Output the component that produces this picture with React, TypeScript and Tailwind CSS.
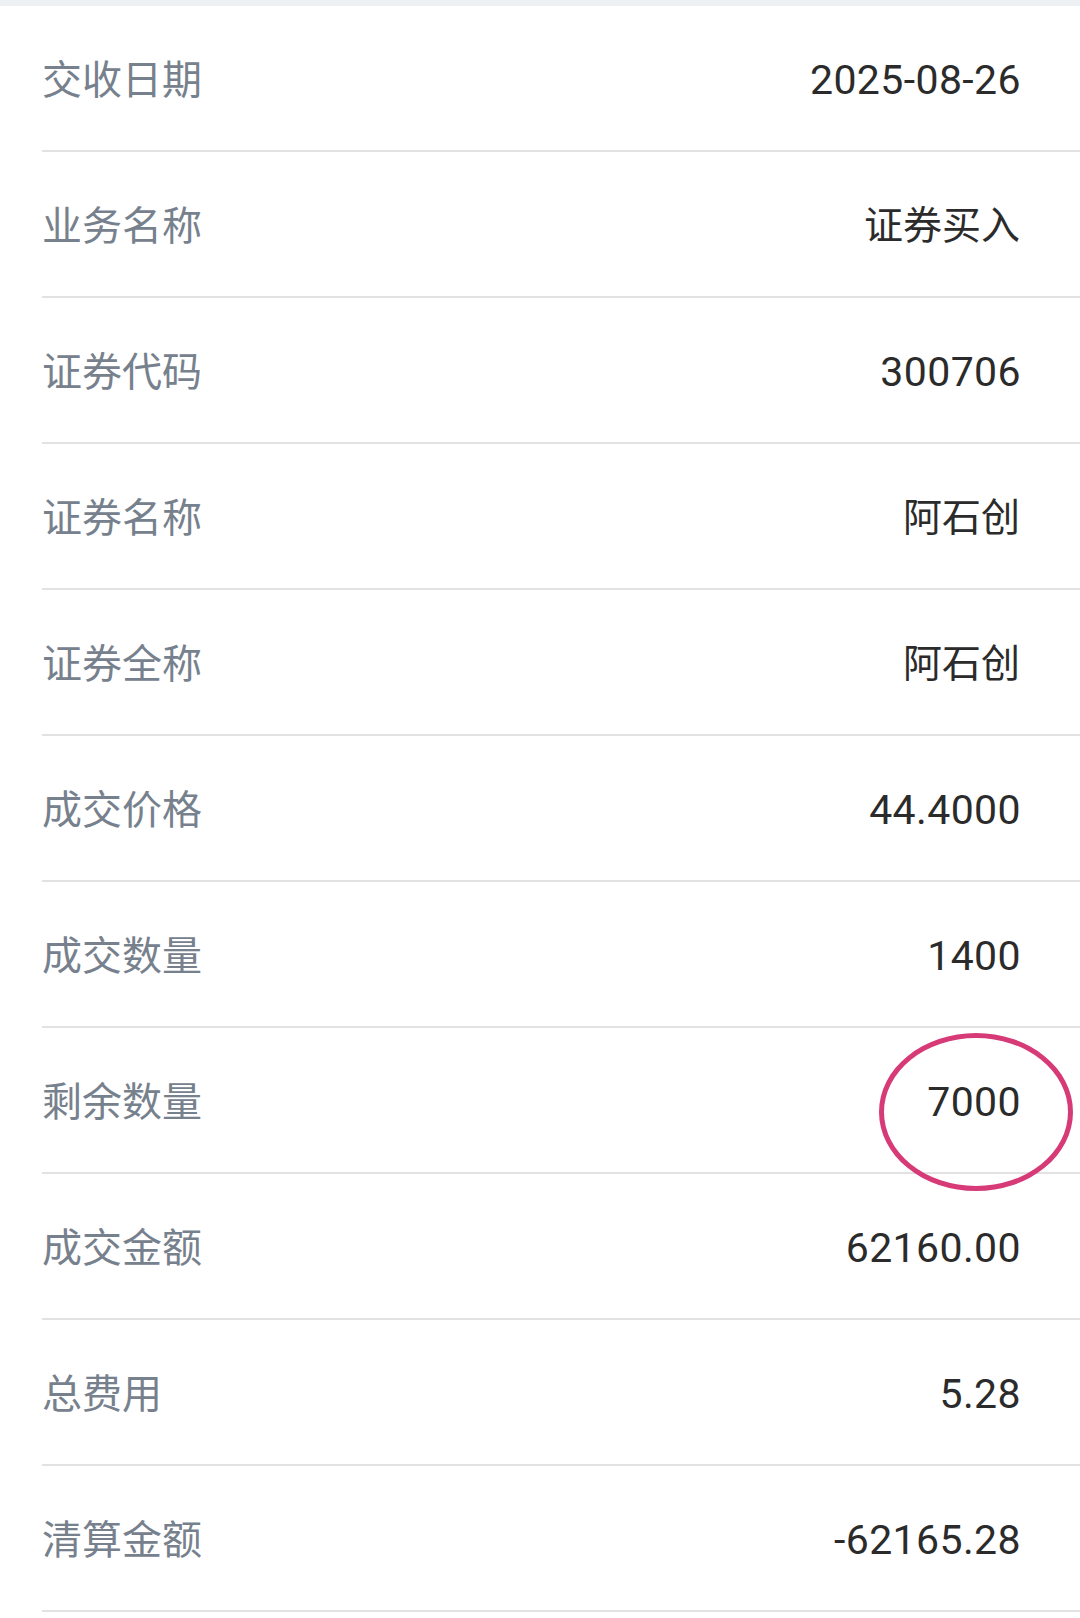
import React from "react";

const rows: [string, string][] = [
  ["交收日期", "2025-08-26"],
  ["业务名称", "证券买入"],
  ["证券代码", "300706"],
  ["证券名称", "阿石创"],
  ["证券全称", "阿石创"],
  ["成交价格", "44.4000"],
  ["成交数量", "1400"],
  ["剩余数量", "7000"],
  ["成交金额", "62160.00"],
  ["总费用", "5.28"],
  ["清算金额", "-62165.28"],
];

const isNum = (s: string) => /^[-0-9.]+$/.test(s);

export default function App() {
  return (
    <div
      className="w-[1080px] h-[1618px] bg-white overflow-hidden"
      style={{ fontFamily: 'Roboto, "Noto Sans CJK SC", sans-serif' }}
    >
      <div className="h-[6px] bg-[#eef1f4]" />
      <div className="pl-[42px]">
        {rows.map(([k, v]) => (
          <div
            key={k}
            className="relative flex items-center justify-between h-[146px] pt-[5px] border-b-2 border-[#e2e2e2] pr-[60px]"
          >
            <span className="text-[40px] text-[#77818d] leading-none">{k}</span>
            {isNum(v) ? (
              <span className="text-[41px] tracking-[0.4px] mr-[-1px] text-[#2b2b2b] leading-none">{v}</span>
            ) : (
              <span className="text-[39px] text-[#2b2b2b] leading-none">{v}</span>
            )}
            {k === "剩余数量" && (
              <div className="absolute left-[837px] top-[5px] w-[194px] h-[158px] rounded-[50%] border-[5px] border-[#d63b78]" />
            )}
          </div>
        ))}
      </div>
    </div>
  );
}
